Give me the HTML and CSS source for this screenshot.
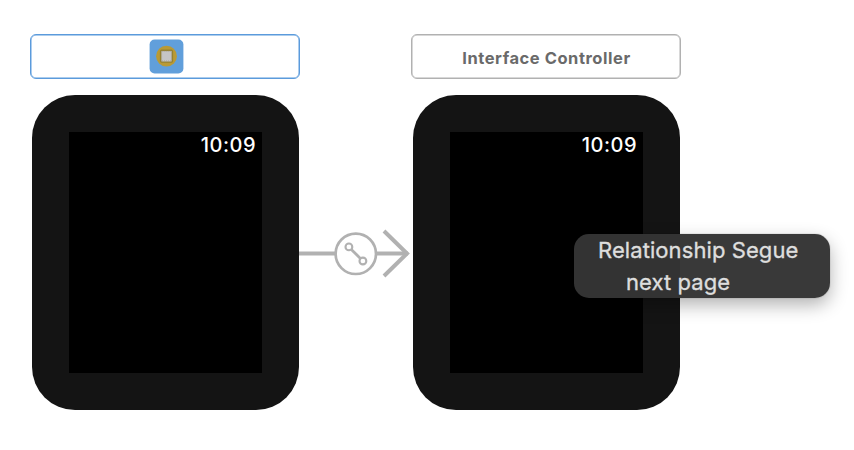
FILE: index.html
```html
<!DOCTYPE html>
<html lang="en">
<head>
<meta charset="utf-8">
<title>Storyboard</title>
<link rel="stylesheet" href="styles.css">
</head>
<body>
<main class="canvas">
  <section class="scene">
    <header class="scene-bar selected">
      <svg class="controller-icon" viewBox="0 0 35 35">
        <rect x="0.6" y="0.6" width="33.8" height="33.8" rx="5" fill="#619fdb"/>
        <circle cx="17.5" cy="17.2" r="10.4" fill="#b99a35"/>
        <rect x="11.6" y="11.3" width="11.8" height="11.8" rx="1" fill="#c5c5c5" stroke="#95812f" stroke-width="1.4"/>
        <rect x="12.6" y="12.3" width="9.8" height="9.8" fill="none" stroke="#a39c83" stroke-width="0.9" stroke-dasharray="1 1"/>
      </svg>
    </header>
    <div class="watch"><div class="screen"><time>10:09</time></div></div>
  </section>
  <svg class="segue" viewBox="0 0 114 60">
    <g fill="none" stroke="#b1b1b1">
      <path d="M0 28.4H36M78 28.4H109" stroke-width="4"/>
      <path d="M85 6L108 28.5L85 51" stroke-width="4"/>
      <circle cx="56.8" cy="28.8" r="20.2" stroke-width="2.7"/>
      <path d="M52.3 24.4L61.4 33.4" stroke-width="2.8"/>
      <circle cx="49.9" cy="21.9" r="3.4" stroke-width="2.1"/>
      <circle cx="63.9" cy="36" r="3.4" stroke-width="2.1"/>
    </g>
  </svg>
  <section class="scene">
    <header class="scene-bar"><span>Interface Controller</span></header>
    <div class="watch"><div class="screen"><time>10:09</time></div></div>
  </section>
  <div class="tooltip"><p class="kind">Relationship Segue</p><p class="detail">next page</p></div>
</main>
</body>
</html>
```
FILE: styles.css
```css
* { box-sizing: border-box; }
body { margin: 0; background: #fff; font-family: Inter, sans-serif; }
.canvas {
  position: relative;
  display: flex;
  width: 854px;
  height: 450px;
  padding: 34px 0 0 30px;
  overflow: hidden;
}
.scene { width: 270px; flex: none; }
.scene-bar {
  display: flex;
  align-items: center;
  justify-content: center;
  width: 270px;
  height: 45px;
  border: 1px solid #b1b1b1;
  border-radius: 6px;
  box-shadow: inset 0 0 0 0.5px #b1b1b1;
  color: #6a6a6a;
  font-size: 16.5px;
  font-weight: 700;
  letter-spacing: 0.54px;
}
.scene-bar.selected { border-color: #5b9bdc; box-shadow: inset 0 0 0 0.5px #5b9bdc; }
.scene-bar span { padding: 3px 0 0 1px; white-space: nowrap; }
.controller-icon { width: 35px; height: 35px; margin-left: 3px; }
.watch {
  width: 267px;
  height: 315px;
  margin: 16px 0 0 2px;
  padding: 37px;
  border-radius: 43px;
  background: #141414;
}
.screen {
  height: 241px;
  padding: 0 6px;
  background: #000;
  color: #fff;
  text-align: right;
}
.screen time {
  display: block;
  font-size: 20px;
  font-weight: 500;
  line-height: 26px;
  letter-spacing: 0.5px;
}
.segue { width: 114px; height: 60px; flex: none; margin: 191px -2px 0 -1px; }
.tooltip {
  position: absolute;
  left: 574px;
  top: 234px;
  width: 256px;
  height: 64px;
  padding: 0 24px;
  border-radius: 15px;
  background: linear-gradient(90deg, #333 0 106px, #393939 106px);
  box-shadow: 0 0 1px rgba(0,0,0,.5), 0 7px 18px rgba(0,0,0,.3);
  color: #dedede;
  font-size: 22px;
  line-height: 32px;
  letter-spacing: 0.08px;
  -webkit-text-stroke: 0.35px #dedede;
  white-space: nowrap;
}
.tooltip p { margin: 0; }
.detail { padding-left: 28px; }
```
